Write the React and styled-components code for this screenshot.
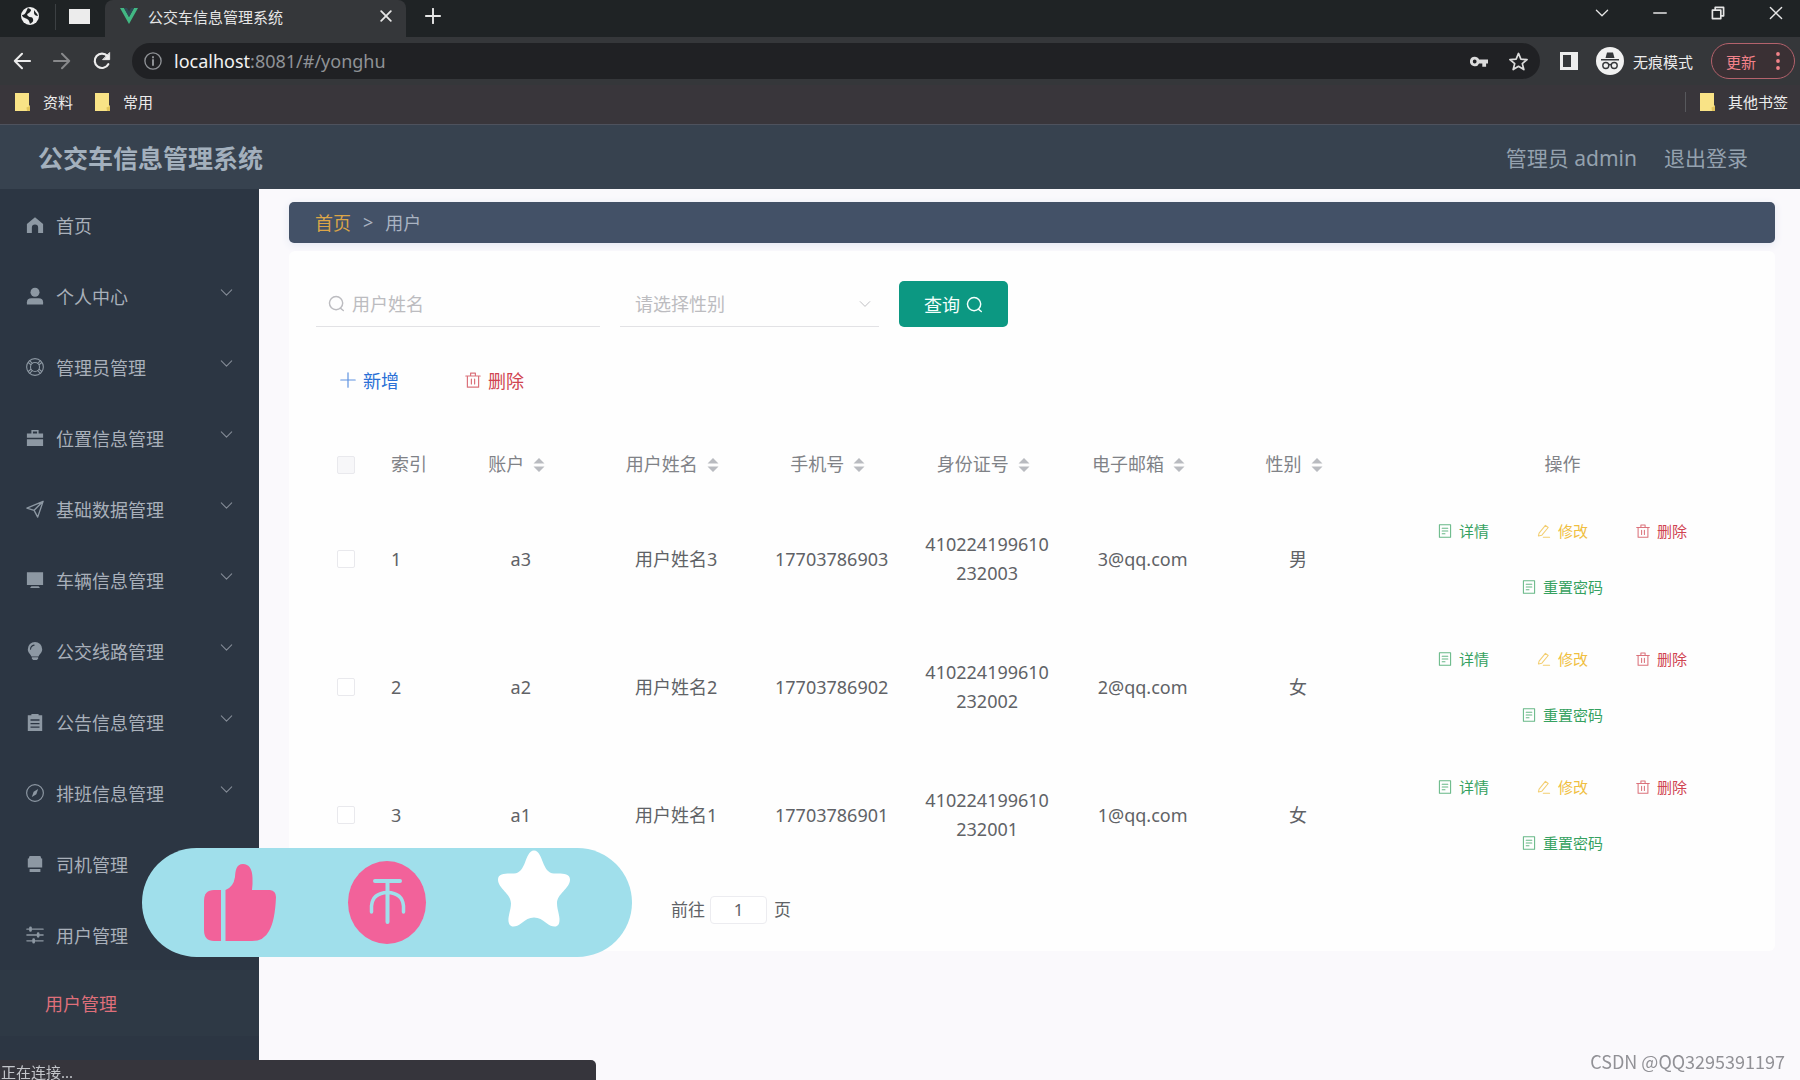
import React from 'react';
import styled, { createGlobalStyle, css } from 'styled-components';

const sans = `"Noto Sans", "Noto Sans CJK SC", sans-serif`;

const GlobalStyle = createGlobalStyle`
  * { box-sizing: border-box; }
  body { margin: 0; font-family: ${sans}; font-size: 18px; background: #faf9fc; }
  button, input, select { font: inherit; color: inherit; margin: 0; }
  button { border: 0; background: none; padding: 0; cursor: pointer; }
  a { color: inherit; text-decoration: none; }
  svg { display: block; flex: none; }
`;

const Page = styled.div`
  min-height: 100vh;
  display: flex;
  flex-direction: column;
  overflow: hidden;
`;

/* ---------- browser frame ---------- */

const TabStrip = styled.div`
  height: 37px;
  display: flex;
  background: #1f2325;
  color: #e6e6e6;
`;

const PinnedTab = styled.button`
  width: ${(p) => p.$width}px;
  display: flex;
  align-items: center;
  justify-content: flex-end;
  padding: 0 15px 5px 0;
`;

const PinDivider = styled.span`
  width: 1px;
  height: 26px;
  margin-top: 4px;
  background: #3c4043;
`;

const ActiveTab = styled.div`
  width: 301px;
  display: flex;
  align-items: center;
  gap: 10px;
  padding: 0 14px 5px 15px;
  background: #35373a;
  border-radius: 8px 8px 0 0;
  font-size: 15px;
`;

const TabTitle = styled.span`
  flex: 1;
  white-space: nowrap;
`;

const NewTab = styled.button`
  margin-left: 19px;
  padding-bottom: 5px;
`;

const WindowControls = styled.div`
  margin-left: auto;
  display: flex;
  align-items: center;
  padding-bottom: 11px;
`;

const WindowButton = styled.button`
  width: 58px;
  display: flex;
  justify-content: flex-end;
  padding-right: 17px;
`;

const Toolbar = styled.div`
  height: 48px;
  display: flex;
  align-items: center;
  background: #35373a;
  color: #ededed;
  padding: 0 5px 0 12px;
`;

const NavButton = styled.button`
  width: 20px;
  margin-right: 20px;
  display: flex;
  justify-content: center;
  opacity: ${(p) => (p.$dim ? 0.45 : 1)};
`;

const AddressBar = styled.div`
  flex: 1;
  height: 36px;
  display: flex;
  align-items: center;
  gap: 12px;
  padding: 0 12px;
  border-radius: 18px;
  background: #202124;
  color: #8f9296;
`;

const Address = styled.span`
  flex: 1;
  b { font-weight: 400; color: #f2f2f2; }
`;

const AddressTools = styled.div`
  display: flex;
  gap: 21px;
  color: #dcdcdc;
`;

const PanelButton = styled.button`
  margin: 0 18px 0 20px;
`;

const Incognito = styled.div`
  display: flex;
  align-items: center;
  gap: 9px;
  font-size: 15px;
  margin-right: 18px;
`;

const UpdateButton = styled.button`
  height: 36px;
  width: 84px;
  display: flex;
  align-items: center;
  justify-content: space-between;
  padding: 0 14px;
  border: 1px solid #b4626c;
  border-radius: 18px;
  background: #3a3034;
  color: #f2828a;
  font-size: 15px;
`;

const Bookmarks = styled.div`
  height: 40px;
  display: flex;
  align-items: center;
  gap: 22px;
  padding: 0 12px 6px 15px;
  background: #39363b;
  border-bottom: 1px solid #4e525d;
  color: #ececec;
  font-size: 15px;
`;

const Bookmark = styled.a`
  display: flex;
  align-items: center;
  gap: 13px;
`;

const OtherBookmarks = styled(Bookmark)`
  margin-left: auto;
  padding-left: 14px;
  border-left: 1px solid #57585c;
  line-height: 20px;
`;

/* ---------- application ---------- */

const Header = styled.header`
  height: 64px;
  display: flex;
  align-items: center;
  justify-content: space-between;
  padding: 0 52px 0 38px;
  background: #37424f;
  color: #a3b0bd;
`;

const SystemTitle = styled.h1`
  margin: 0;
  font-size: 25px;
  font-weight: 700;
`;

const Account = styled.div`
  display: flex;
  gap: 27px;
  font-size: 21px;
  color: #94a1ae;
`;

const Body = styled.div`
  flex: 1;
  display: flex;
`;

const Sidebar = styled.nav`
  width: 259px;
  flex: none;
  background: #2c3643;
  color: #a9b0ba;
`;

const MenuItem = styled.a`
  height: 71px;
  display: flex;
  align-items: center;
  gap: 12px;
  padding: 0 26px;
`;

const MenuText = styled.span`
  flex: 1;
`;

const MenuIcon = styled.span`
  color: #8d98a3;
`;

const MenuArrow = styled.span`
  padding-bottom: 6px;
  color: #858c97;
`;

const SubItem = styled.a`
  height: 66px;
  display: flex;
  align-items: center;
  padding-left: 45px;
  background: #2e3945;
  color: #df6f7a;
`;

const Main = styled.main`
  flex: 1;
  min-width: 0;
  padding: 13px 25px 20px 30px;
  background: #faf9fc;
`;

const Breadcrumb = styled.div`
  height: 41px;
  display: flex;
  align-items: center;
  gap: 12px;
  padding: 0 26px 2px;
  border-radius: 5px;
  background: #435167;
  box-shadow: 0 2px 8px #e4e8f2;
  color: #a9b3c2;
  a { color: #dca548; }
`;

const Card = styled.section`
  margin-top: 8px;
  padding: 30px 26px 27px 27px;
  border-radius: 6px;
  background: #fefefe;
`;

const Filters = styled.form`
  display: flex;
  gap: 20px;
`;

const Field = styled.label`
  position: relative;
  width: ${(p) => p.$width}px;
  height: 46px;
  display: flex;
  align-items: center;
  border-bottom: 1px solid #e2e2e5;
  color: #bcbcc0;
`;

const LeadIcon = styled.span`
  position: absolute;
  left: 12px;
`;

const TrailIcon = styled.span`
  position: absolute;
  right: 8px;
  pointer-events: none;
`;

const bare = css`
  width: 100%;
  height: 100%;
  border: 0;
  outline: 0;
  background: none;
`;

const NameInput = styled.input`
  ${bare}
  padding: 0 0 0 36px;
  &::placeholder { color: #bcbcc0; opacity: 1; }
`;

const SexSelect = styled.select`
  ${bare}
  appearance: none;
  padding: 0 30px 0 15px;
`;

const QueryButton = styled.button`
  height: 46px;
  display: flex;
  align-items: center;
  gap: 6px;
  padding: 0 25px;
  border-radius: 5px;
  background: #0c9882;
  color: #f4fffc;
`;

const Tools = styled.div`
  display: flex;
  gap: 18px;
  margin: 30px 0 31px;
`;

const tones = { blue: '#2a70d6', red: '#d04450', green: '#35a160', amber: '#f0bf42' };

const ToolButton = styled.button`
  height: 46px;
  display: flex;
  align-items: center;
  gap: 7px;
  padding: 0 24px;
  color: ${(p) => tones[p.$tone]};
  svg { opacity: 0.75; }
`;

const Table = styled.table`
  width: 100%;
  table-layout: fixed;
  border-collapse: collapse;
  color: #606266;
  line-height: 29px;
`;

const Col = styled.col`
  width: ${(p) => p.$width};
`;

const Th = styled.th`
  height: 61px;
  padding: 0 12px;
  padding-left: ${(p) => (p.$left ? 15 : 12)}px;
  font-weight: 400;
  color: #808287;
  white-space: nowrap;
  text-align: ${(p) => (p.$left ? 'left' : 'center')};
`;

const Sortable = styled.button`
  display: inline-flex;
  align-items: center;
  gap: 9px;
  margin-right: 8px;
`;

const Td = styled.td`
  height: 128px;
  padding: 0 12px;
  padding-left: ${(p) => (p.$left ? 15 : 12)}px;
  text-align: ${(p) => (p.$left ? 'left' : 'center')};
  word-break: break-all;
`;

const Tick = styled.input.attrs({ type: 'checkbox' })`
  appearance: none;
  display: block;
  width: 18px;
  height: 18px;
  margin: 0 auto;
  border: 1px solid #e9e9ed;
  border-radius: 2px;
  background: ${(p) => (p.$head ? '#f7f7f9' : '#fff')};
`;

const Actions = styled.div`
  display: flex;
  flex-wrap: wrap;
  justify-content: center;
  gap: 16px 8px;
`;

const ActionButton = styled.button`
  height: 40px;
  display: flex;
  align-items: center;
  gap: 7px;
  padding: 0 20px;
  font-size: 15px;
  color: ${(p) => tones[p.$tone]};
  svg { opacity: 0.75; }
`;

const Pager = styled.div`
  display: flex;
  align-items: center;
  margin-top: 17px;
  padding-left: 355px;
  font-size: 17px;
  line-height: 28px;
  color: #606266;
`;

const PageInput = styled.input`
  width: 57px;
  height: 28px;
  margin: 0 7px 0 5px;
  padding: 0;
  border: 1px solid #ececf0;
  border-radius: 4px;
  text-align: center;
  background: #fff;
`;

const PagerLabel = styled.label`
  display: flex;
  align-items: center;
`;

/* ---------- overlays ---------- */

const ReactionPill = styled.div`
  position: fixed;
  left: 142px;
  bottom: 123px;
  width: 490px;
  height: 109px;
  border-radius: 55px;
  background: #a0dfeb;
`;

const StatusBar = styled.div`
  position: fixed;
  left: 0;
  bottom: 0;
  width: 596px;
  height: 20px;
  padding-left: 1px;
  border-radius: 0 5px 0 0;
  background: #36353c;
  color: #c3c5ca;
  font-size: 15px;
  line-height: 24px;
`;

const Watermark = styled.div`
  position: fixed;
  right: 15px;
  bottom: 5px;
  font-family: "Noto Sans CJK SC", sans-serif;
  font-size: 18px;
  line-height: 28px;
  color: #919196;
`;

/* ---------- icons ---------- */

const Icon = ({ size = 18, h, box = '0 0 20 20', w = 1.5, fill = 'none', children }) => (
  <svg width={size} height={h || size} viewBox={box} fill={fill} stroke={fill === 'none' ? 'currentColor' : 'none'}
    strokeWidth={w} strokeLinecap="round" strokeLinejoin="round" aria-hidden="true">
    {children}
  </svg>
);

const Solid = (p) => <Icon fill="currentColor" {...p} />;

const Chevron = ({ size = 13, w = 1.6 }) => (
  <Icon size={size} w={w}><path d="M2 6l8 8 8-8" /></Icon>
);

const Search = ({ size }) => (
  <Icon size={size} w={1.7}><circle cx="9.5" cy="9.5" r="7.8" /><path d="M14.5 15.5l3.5 2.8" /></Icon>
);

const Trash = ({ size }) => (
  <Icon size={size}><path d="M1 5h18M3 5v14h14V5M7 5V1.5h6V5M8 9v6M12 9v6" /></Icon>
);

const Doc = () => (
  <Icon size={14}><path d="M2 1h16v18H2zM6 6h8M6 10h8M6 14h4" /></Icon>
);

const Pen = () => (
  <Icon size={14}><path d="M3 13L12 2l4 3-9 11-5 1zM9 19h9" /></Icon>
);

const Folder = () => (
  <svg width="15" height="18" viewBox="0 0 15 18" aria-hidden="true">
    <path d="M0 0h14v12l1 1v5H0z" fill="#f9e386" />
    <path d="M11.500 14.500l3.500-1.500v5h-3z" fill="#e3c55c" />
  </svg>
);

const Carets = () => (
  <svg width="12" height="16" viewBox="0 0 12 16" fill="#b9bbc0" aria-hidden="true">
    <path d="M6 1l5.500 5.500H.5zM6 15l5.500-5.500H.5z" />
  </svg>
);

const menuIcons = {
  home: <Solid><path d="M10 1.500L19 9v10h-5.500v-6a3.500 3.500 0 0 0-7 0v6H1V9z" /></Solid>,
  user: <Solid><circle cx="10" cy="5.800" r="5" /><path d="M1 19.500v-2.500q0-4.500 5-4.500h8q5 0 5 4.500v2.500z" /></Solid>,
  help: (
    <Icon w={1.2}>
      <circle cx="10" cy="10" r="9.300" /><circle cx="10" cy="10" r="5" />
      <path d="M4 3l3 3M16 3l-3 3M4 17l3-3M16 17l-3-3M2.500 5l3 2.500M17.500 5l-3 2.500M2.500 15l3-2.500M17.500 15l-3-2.500" />
    </Icon>
  ),
  toolbox: <Solid><path d="M6 5V1h8v4h5v4.700H1V5zm1.700 0h4.600V2.700H7.700zM1 11.500h18V19H1z" fillRule="evenodd" /></Solid>,
  send: <Icon><path d="M19 1.500L1 9l8 2.500L13 19zM19 1.500L9 11.500" /></Icon>,
  monitor: <Solid><path d="M1 1.500h18v14H1zM6 17h8l1.500 2h-11z" /></Solid>,
  bulb: <Solid><path d="M10 0a8 8 0 0 1 8 8c0 4-3 5-4 8H6c-1-3-4-4-4-8a8 8 0 0 1 8-8zM6.500 17h7v1.500l-1.500 1.500H8l-1.500-1.500z" /><path d="M5 8a5 5 0 0 1 4-4.500" fill="none" stroke="#2c3643" strokeWidth="1.200" /></Solid>,
  board: <Solid><path d="M2 2.500h4V1h8v1.500h4V20H2zM5 7v1.500h10V7zm0 4v1.500h10V11zm0 4v1.500h10V15z" fillRule="evenodd" /></Solid>,
  compass: <Icon w={1.3}><circle cx="10" cy="10" r="9.300" /><path d="M13.500 5.500l-2 6-5 3 2-6z" fill="currentColor" stroke="none" /></Icon>,
  printer: <Solid><path d="M4 1h12l1 3h1v10H2V4h1zM4 15.500h12V19H4z" /></Solid>,
  sliders: <Icon><path d="M1 3.500h18M1 10h18M1 16.500h18" /><path d="M5 2v3M13.500 8.500v3M8.500 15v3" strokeWidth="3" /></Icon>,
};

const menu = [
  ['home', '首页', false],
  ['user', '个人中心', true],
  ['help', '管理员管理', true],
  ['toolbox', '位置信息管理', true],
  ['send', '基础数据管理', true],
  ['monitor', '车辆信息管理', true],
  ['bulb', '公交线路管理', true],
  ['board', '公告信息管理', true],
  ['compass', '排班信息管理', true],
  ['printer', '司机管理', true],
  ['sliders', '用户管理', true],
];

const sortable = ['账户', '用户姓名', '手机号', '身份证号', '电子邮箱', '性别'];

const rows = [
  ['a3', '用户姓名3', '17703786903', '410224199610232003', '3@qq.com', '男'],
  ['a2', '用户姓名2', '17703786902', '410224199610232002', '2@qq.com', '女'],
  ['a1', '用户姓名1', '17703786901', '410224199610232001', '1@qq.com', '女'],
];

function BrowserFrame() {
  return (
    <>
      <TabStrip>
        <PinnedTab $width={55} aria-label="浏览器">
          <svg width="20" height="20" viewBox="0 0 20 20">
            <circle cx="10" cy="10" r="9" fill="#f0f0f0" />
            <path d="M8 2c3 1 4 2 2 4S6 8 8 10s4 0 5 3-2 4-3 5c-1-3-1-4-3-5S2 11 2 9c2 0 3-1 4-3s1-3 2-4zM14 4c1 2 3 3 4 6-2 0-4-1-4-3z" fill="#1f2325" />
          </svg>
        </PinnedTab>
        <PinDivider />
        <PinnedTab $width={49} aria-label="固定标签页">
          <svg width="21" height="15" viewBox="0 0 21 15"><rect width="21" height="15" fill="#ececec" /></svg>
        </PinnedTab>
        <ActiveTab>
          <svg width="18" height="16" viewBox="0 0 18 16" aria-hidden="true">
            <path d="M0 0h4l5 9 5-9h4L9 16z" fill="#42b883" />
            <path d="M4 0h3l2 3.500L11 0h3L9 9z" fill="#2f4a55" />
          </svg>
          <TabTitle>公交车信息管理系统</TabTitle>
          <button aria-label="关闭标签页"><Icon size={12} w={3}><path d="M2 2l16 16M18 2L2 18" /></Icon></button>
        </ActiveTab>
        <NewTab aria-label="新标签页"><Icon size={16} w={2.4}><path d="M10 1v18M1 10h18" /></Icon></NewTab>
        <WindowControls>
          <WindowButton aria-label="搜索标签页"><Chevron size={14} w={1.8} /></WindowButton>
          <WindowButton aria-label="最小化"><Icon size={14} w={1.8}><path d="M1 10h18" /></Icon></WindowButton>
          <WindowButton aria-label="还原"><Icon size={14} w={2.4}><path d="M2 6h12v12H2zM6 5V2h12v12h-3" /></Icon></WindowButton>
          <WindowButton aria-label="关闭"><Icon size={14} w={2}><path d="M2 2l16 16M18 2L2 18" /></Icon></WindowButton>
        </WindowControls>
      </TabStrip>
      <Toolbar>
        <NavButton aria-label="后退"><Icon w={2.2}><path d="M19 10H2M10 2l-8 8 8 8" /></Icon></NavButton>
        <NavButton $dim aria-label="前进"><Icon w={2.2}><path d="M1 10h17M10 2l8 8-8 8" /></Icon></NavButton>
        <NavButton aria-label="刷新"><Icon w={2.4}><path d="M17 13.500A8 8 0 1 1 16 4.500" /><path d="M18.500 1v7.500H11z" fill="currentColor" strokeWidth="1" /></Icon></NavButton>
        <AddressBar>
          <Icon><circle cx="10" cy="10" r="9" /><path d="M10 9v5.500M10 5.500v.5" strokeWidth="2.200" /></Icon>
          <Address><b>localhost</b>:8081/#/yonghu</Address>
          <AddressTools>
            <Solid size={19}><path d="M6 5a5 5 0 0 1 4.600 3H20v4h-2v3.500h-4V12h-3.400A5 5 0 1 1 6 5zm0 3a2 2 0 1 0 0 4 2 2 0 0 0 0-4z" fillRule="evenodd" /></Solid>
            <Icon size={19} w={1.8}><path d="M10 1.500l2.500 6 6.500.5-5 4.200 1.600 6.300L10 15l-5.600 3.500L6 12.200 1 8l6.500-.5z" /></Icon>
          </AddressTools>
        </AddressBar>
        <PanelButton aria-label="侧边栏">
          <svg width="18" height="18" viewBox="0 0 18 18"><path d="M0 0h18v18H0zM3 3v12h8V3z" fill="#ededed" fillRule="evenodd" /></svg>
        </PanelButton>
        <Incognito>
          <svg width="28" height="28" viewBox="0 0 28 28" aria-hidden="true">
            <circle cx="14" cy="14" r="14" fill="#f1f1f1" />
            <path d="M9.500 11l1.500-5.500h6L18.500 11zM5 12h18v1.500H5z" fill="#35373a" />
            <g fill="none" stroke="#35373a" strokeWidth="1.400"><circle cx="9.800" cy="18.500" r="3" /><circle cx="18.200" cy="18.500" r="3" /><path d="M12.500 18q1.500-1 3 0" /></g>
          </svg>
          无痕模式
        </Incognito>
        <UpdateButton>
          更新
          <svg width="4" height="18" viewBox="0 0 4 18" fill="currentColor" aria-hidden="true"><circle cx="2" cy="2" r="1.900" /><circle cx="2" cy="9" r="1.900" /><circle cx="2" cy="16" r="1.900" /></svg>
        </UpdateButton>
      </Toolbar>
      <Bookmarks>
        <Bookmark href="#"><Folder />资料</Bookmark>
        <Bookmark href="#"><Folder />常用</Bookmark>
        <OtherBookmarks href="#"><Folder />其他书签</OtherBookmarks>
      </Bookmarks>
    </>
  );
}

function UserTable() {
  return (
    <Table>
      <colgroup>
        <Col $width="60px" />
        <Col $width="67px" />
        {sortable.map((s) => <Col key={s} $width="10.850%" />)}
        <Col $width="auto" />
      </colgroup>
      <thead>
        <tr>
          <Th><Tick $head aria-label="全选" /></Th>
          <Th $left>索引</Th>
          {sortable.map((s) => (
            <Th key={s}><Sortable>{s}<Carets /></Sortable></Th>
          ))}
          <Th>操作</Th>
        </tr>
      </thead>
      <tbody>
        {rows.map((row, i) => (
          <tr key={row[0]}>
            <Td><Tick aria-label={`选择 ${row[0]}`} /></Td>
            <Td $left>{i + 1}</Td>
            {row.map((v) => <Td key={v}>{v}</Td>)}
            <Td>
              <Actions>
                <ActionButton $tone="green"><Doc />详情</ActionButton>
                <ActionButton $tone="amber"><Pen />修改</ActionButton>
                <ActionButton $tone="red"><Trash size={14} />删除</ActionButton>
                <ActionButton $tone="green"><Doc />重置密码</ActionButton>
              </Actions>
            </Td>
          </tr>
        ))}
      </tbody>
    </Table>
  );
}

function Reactions() {
  return (
    <ReactionPill>
      <svg width="490" height="109" viewBox="0 0 490 109" aria-hidden="true">
        <g fill="#f2629a">
          <path d="M72 42h7v51h-7q-10 0-10-11V53q0-11 10-11z" />
          <path d="M83.500 93V42q8-3 9.500-13c.5-6 1-13 8-13q9 0 9.500 14 .3 6-.5 12h18q6 1 6 7-1 24-7 34-5 10-17 10z" />
          <ellipse cx="245" cy="54.500" rx="39" ry="41.500" />
        </g>
        <g fill="none" stroke="#a0dfeb" strokeWidth="4" strokeLinecap="round">
          <path d="M233 33h25M245.500 33v41" />
          <path d="M229.500 64V58q1-13 16-13.500 15 .5 16 13.500v6" strokeWidth="3.500" />
        </g>
        <path d="M392 2.500c5 0 7 7 9 12s5 11 11 11 16-1 16 6c0 9-13 14-13 24 0 7 4 14 2 20-2 5-8 3-12 0-5-4-8-6-13-6s-8 2-13 6c-4 3-10 5-12 0-2-6 2-13 2-20 0-10-13-15-13-24 0-7 10-6 16-6s9-6 11-11 4-12 9-12z" fill="#fff" />
      </svg>
    </ReactionPill>
  );
}

export default function App() {
  return (
    <Page>
      <GlobalStyle />
      <BrowserFrame />
      <Header>
        <SystemTitle>公交车信息管理系统</SystemTitle>
        <Account><span>管理员 admin</span><a href="#">退出登录</a></Account>
      </Header>
      <Body>
        <Sidebar>
          {menu.map(([icon, text, arrow]) => (
            <MenuItem key={text} href="#">
              <MenuIcon>{menuIcons[icon]}</MenuIcon>
              <MenuText>{text}</MenuText>
              {arrow && <MenuArrow><Chevron /></MenuArrow>}
            </MenuItem>
          ))}
          <SubItem href="#">用户管理</SubItem>
        </Sidebar>
        <Main>
          <Breadcrumb><a href="#">首页</a><span>&gt;</span><span>用户</span></Breadcrumb>
          <Card>
            <Filters onSubmit={(e) => e.preventDefault()}>
              <Field $width={284}>
                <LeadIcon><Search size={17} /></LeadIcon>
                <NameInput placeholder="用户姓名" aria-label="用户姓名" />
              </Field>
              <Field $width={259}>
                <SexSelect aria-label="性别" defaultValue="">
                  <option value="">请选择性别</option>
                </SexSelect>
                <TrailIcon><Chevron size={12} /></TrailIcon>
              </Field>
              <QueryButton type="submit">查询<Search size={17} /></QueryButton>
            </Filters>
            <Tools>
              <ToolButton $tone="blue"><Icon size={16}><path d="M10 1v18M1 10h18" /></Icon>新增</ToolButton>
              <ToolButton $tone="red"><Trash size={16} />删除</ToolButton>
            </Tools>
            <UserTable />
            <Pager>
              <PagerLabel>前往<PageInput defaultValue="1" />页</PagerLabel>
            </Pager>
          </Card>
        </Main>
      </Body>
      <StatusBar>正在连接...</StatusBar>
      <Reactions />
      <Watermark>CSDN @QQ3295391197</Watermark>
    </Page>
  );
}
